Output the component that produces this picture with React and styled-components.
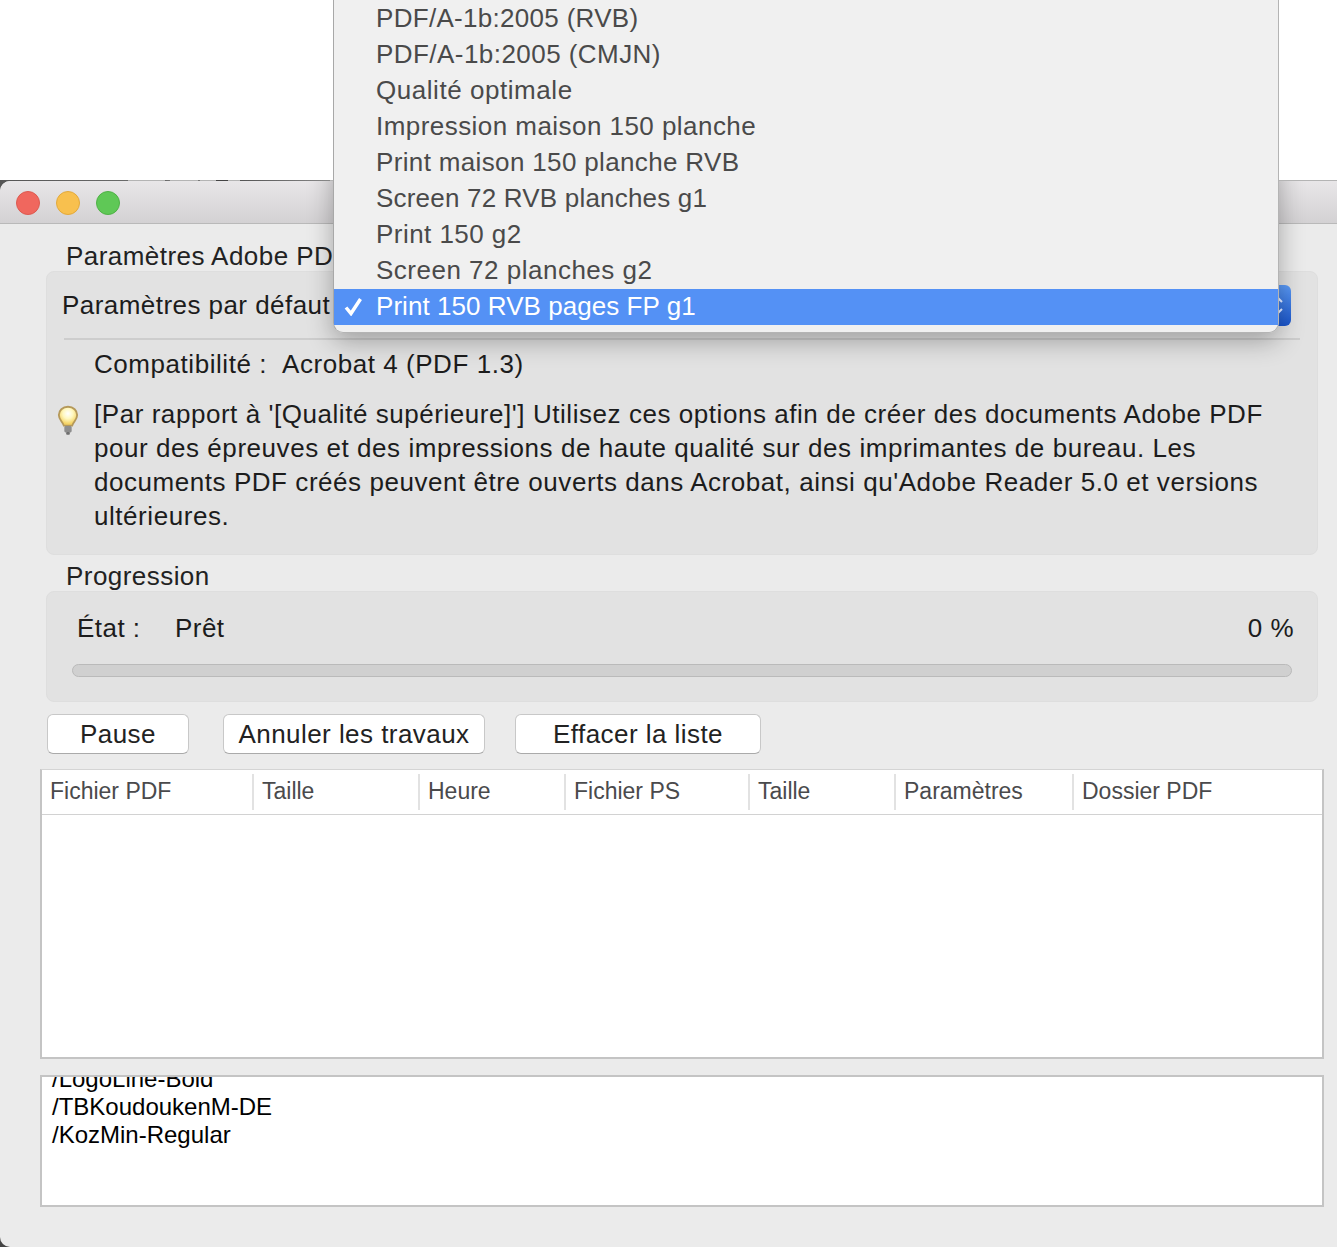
import * as React from 'react'
import styled, { createGlobalStyle } from 'styled-components'

const GlobalStyle = createGlobalStyle`
  html, body {
    margin: 0;
    padding: 0;
    background: #fff;
  }
  * {
    box-sizing: border-box;
  }
`

const Page = styled.div`
  position: relative;
  width: 1337px;
  height: 1247px;
  overflow: hidden;
  padding-top: 181px;
  background: #fff;
  font-family: "Liberation Sans", Arial, sans-serif;
  letter-spacing: 0.45px;
  color: #1c1c1c;
`

// the window behind, only its clipped edge shows above the title bar
const BehindEdge = styled.div`
  position: absolute;
  left: 0;
  top: 180px;
  width: 100%;
  height: 12px;
  background: linear-gradient(
    90deg,
    #555 0,
    #6a6a6a 128px,
    #b4b4b4 128px,
    #b4b4b4 165px,
    #666 165px,
    #777 170px,
    #b4b4b4 170px,
    #b4b4b4 198px,
    #777 198px,
    #777 200px,
    #b4b4b4 200px,
    #b4b4b4 216px,
    #444 216px,
    #444 228px,
    #b4b4b4 228px,
    #b4b4b4 240px,
    #555 240px,
    #888 330px,
    #b4b4b4 330px
  );
`

const BehindCorner = styled.div`
  position: absolute;
  left: 0;
  bottom: 0;
  width: 12px;
  height: 12px;
  background: #444;
`

const Window = styled.div`
  position: relative;
  height: 1066px;
  overflow: hidden;
  background: #ebebeb;
  border-radius: 10px 0 0 10px;
`

const TitleBar = styled.div`
  height: 43px;
  display: flex;
  align-items: center;
  gap: 16px;
  padding: 2px 16px 0;
  background: linear-gradient(#e8e6e8, #d3d1d3);
  border-bottom: 1px solid #b9b9b9;
`

const Light = styled.span`
  width: 24px;
  height: 24px;
  border-radius: 50%;
  background: ${(props) => props.color};
  border: 1px solid ${(props) => props.edge};
`

const Content = styled.div`
  padding: 17px 13px 0 40px;
`

const GroupLabel = styled.div`
  font-size: 26px;
  line-height: 30px;
  margin-left: 26px;
  color: #222;
`

const GroupBox = styled.div`
  margin: 0 6px 0 6px;
  background: #e2e2e2;
  border: 1px solid #dedede;
  border-radius: 8px;
`

const SettingsBox = styled(GroupBox)`
  height: 284px;
  padding: 13px 17px 0 15px;
`

const PresetRow = styled.div`
  display: flex;
  align-items: center;
  justify-content: space-between;
  height: 41px;
  font-size: 26px;
`

const SelectButton = styled.div`
  width: 958px;
  height: 41px;
  margin-right: 9px;
  border-radius: 6px;
  background: linear-gradient(#5b9bf8, #1a55cb);
`

const Divider = styled.div`
  height: 2px;
  margin: 12px 0 0 2px;
  background: #cdcdcd;
`

const CompatRow = styled.div`
  display: flex;
  gap: 15px;
  padding-left: 32px;
  margin-top: 7px;
  font-size: 26px;
  line-height: 34px;
  letter-spacing: 0.55px;
`

const Description = styled.div`
  display: flex;
  margin-top: 16px;
`

const BulbIcon = styled.svg`
  flex: none;
  width: 22px;
  height: 33px;
  margin: 7px 15px 0 -5px;
`

const DescriptionText = styled.p`
  margin: 0;
  font-size: 26px;
  line-height: 34px;
  letter-spacing: 0.55px;
  width: 1200px;
`

const ProgressLabel = styled(GroupLabel)`
  margin-top: 6px;
`

const ProgressBox = styled(GroupBox)`
  height: 111px;
  padding: 20px 25px 0 25px;
`

const StatusRow = styled.div`
  display: flex;
  align-items: center;
  font-size: 26px;
  line-height: 32px;
  padding-left: 5px;
`

const StatusLabel = styled.span`
  width: 98px;
`

const Percent = styled.span`
  margin-left: auto;
  margin-right: -2px;
`

const Track = styled.div`
  height: 13px;
  margin-top: 20px;
  border-radius: 7px;
  background: #d0d0d0;
  border: 1px solid #bababa;
`

const ButtonRow = styled.div`
  display: flex;
  margin: 12px 0 0 7px;
`

const Button = styled.button`
  width: ${(props) => props.w}px;
  height: 40px;
  margin-right: ${(props) => props.gap}px;
  padding: 0;
  background: #fff;
  border: 1px solid #c8c8c8;
  border-bottom-color: #aaa;
  border-radius: 6px;
  font-family: inherit;
  font-size: 26px;
  letter-spacing: inherit;
  color: #222;
`

const Table = styled.div`
  height: 290px;
  margin-top: 15px;
  background: #fff;
  border: 2px solid #c4c4c4;
  border-top-width: 1px;
  border-top-color: #d4d4d4;
`

const TableHead = styled.div`
  display: flex;
  height: 45px;
  align-items: center;
  border-bottom: 1px solid #d2d2d2;
`

const HeadCell = styled.div`
  width: ${(props) => props.w}px;
  height: 36px;
  padding-left: 8px;
  line-height: 35px;
  font-size: 23px;
  letter-spacing: 0;
  color: #4a4a4c;
  border-right: 2px solid #e2e2e2;
  &:last-child {
    border-right: none;
  }
`

const LogBox = styled.div`
  height: 132px;
  margin-top: 16px;
  padding: 0 10px;
  overflow: hidden;
  background: #fff;
  border: 2px solid #c4c4c4;
  font-size: 24px;
  letter-spacing: 0;
  line-height: 28px;
  color: #000;
`

const LogInner = styled.div`
  margin-top: -12px;
`

const MenuShadow = styled.div`
  position: absolute;
  left: 333px;
  top: -30px;
  width: 946px;
  height: 182px;
  border-radius: 0 0 10px 10px;
  box-shadow: 0 8px 26px rgba(0, 0, 0, 0.3);
`

const Menu = styled.div`
  position: absolute;
  left: 333px;
  top: 0;
  width: 946px;
  height: 333px;
  padding-top: 1px;
  background: #f0f0f0;
  border-radius: 0 0 10px 10px;
  border: 1px solid #b4b4b4;
  border-top: none;
  border-left-color: #a8a8a8;
`

const MenuItem = styled.div`
  position: relative;
  height: 36px;
  padding-left: 42px;
  font-size: 26px;
  line-height: 35px;
  letter-spacing: ${(props) => props.spacing}px;
  color: ${(props) => (props.selected ? '#fff' : '#4a4a4a')};
  background: ${(props) => (props.selected ? '#5491f5' : 'transparent')};
`

const Check = styled.svg`
  position: absolute;
  left: 10px;
  top: 8px;
  width: 19px;
  height: 19px;
`

const Chevrons = styled.svg`
  position: absolute;
  left: 1278px;
  top: 296px;
  width: 6px;
  height: 20px;
`

const presets = [
  ['PDF/A-1b:2005 (RVB)', 0.3],
  ['PDF/A-1b:2005 (CMJN)', 0.45],
  ['Qualité optimale', 0.55],
  ['Impression maison 150 planche', 0.45],
  ['Print maison 150 planche RVB', 0.35],
  ['Screen 72 RVB planches g1', 0.2],
  ['Print 150 g2', 0.45],
  ['Screen 72 planches g2', 0.5],
  ['Print 150 RVB pages FP g1', 0.05],
]

const columns = [
  ['Fichier PDF', 212],
  ['Taille', 166],
  ['Heure', 146],
  ['Fichier PS', 184],
  ['Taille', 146],
  ['Paramètres', 178],
  ['Dossier PDF', 248],
]

const Bulb = () => (
  <BulbIcon viewBox="0 0 24 33">
    <defs>
      <radialGradient id="glow" cx="50%" cy="36%" r="55%">
        <stop offset="0%" stopColor="#ffffff" />
        <stop offset="50%" stopColor="#fff8c0" />
        <stop offset="100%" stopColor="#f4d264" />
      </radialGradient>
    </defs>
    <path
      d="M12 1.5C6 1.5 2 5.8 2 10.6c0 5 3.8 6.8 5.4 11.4h9.2C18.2 17.4 22 15.6 22 10.6 22 5.8 18 1.5 12 1.5z"
      fill="url(#glow)"
      stroke="#b5995a"
      strokeWidth="2"
    />
    <rect x="8" y="22.5" width="8" height="7" rx="1.5" fill="#8d8d8d" />
    <rect x="10" y="29" width="4" height="3" rx="1" fill="#6f6f6f" />
  </BulbIcon>
)

export default function App() {
  return (
    <Page>
      <GlobalStyle />
      <BehindEdge />
      <BehindCorner />
      <Window>
        <TitleBar>
          <Light color="#f0675e" edge="#dc5a50" />
          <Light color="#f8c04e" edge="#e2a93c" />
          <Light color="#5fc856" edge="#4fb146" />
        </TitleBar>
        <Content>
          <GroupLabel>Paramètres Adobe PDF</GroupLabel>
          <SettingsBox>
            <PresetRow>
              <span>Paramètres par défaut</span>
              <SelectButton />
            </PresetRow>
            <Divider />
            <CompatRow>
              <span>Compatibilité :</span>
              <span>Acrobat 4 (PDF 1.3)</span>
            </CompatRow>
            <Description>
              <Bulb />
              <DescriptionText>
                [Par rapport à '[Qualité supérieure]'] Utilisez ces options afin de créer des documents Adobe PDF pour des épreuves et des impressions de haute qualité sur des imprimantes de bureau. Les documents PDF créés peuvent être ouverts dans Acrobat, ainsi qu'Adobe Reader 5.0 et versions ultérieures.
              </DescriptionText>
            </Description>
          </SettingsBox>
          <ProgressLabel>Progression</ProgressLabel>
          <ProgressBox>
            <StatusRow>
              <StatusLabel>État :</StatusLabel>
              <span>Prêt</span>
              <Percent>0 %</Percent>
            </StatusRow>
            <Track />
          </ProgressBox>
          <ButtonRow>
            <Button w={142} gap={34}>Pause</Button>
            <Button w={262} gap={30}>Annuler les travaux</Button>
            <Button w={246} gap={0}>Effacer la liste</Button>
          </ButtonRow>
          <Table>
            <TableHead>
              {columns.map(([name, w], i) => (
                <HeadCell key={i} w={w}>{name}</HeadCell>
              ))}
            </TableHead>
          </Table>
          <LogBox>
            <LogInner>
              <div>/LogoLine-Bold</div>
              <div>/TBKoudoukenM-DE</div>
              <div>/KozMin-Regular</div>
            </LogInner>
          </LogBox>
        </Content>
        <MenuShadow />
      </Window>
      <Chevrons viewBox="0 0 6 20">
        <path d="M0 2l4 4M4 13l-4 4" stroke="#c8d4ee" strokeWidth="2" fill="none" />
      </Chevrons>
      <Menu>
        {presets.map(([name, spacing], i) => (
          <MenuItem key={name} spacing={spacing} selected={i === presets.length - 1}>
            {i === presets.length - 1 && (
              <Check viewBox="0 0 19 19">
                <path d="M2 10.5l5 6L16.5 2" stroke="#fff" strokeWidth="3.5" fill="none" />
              </Check>
            )}
            {name}
          </MenuItem>
        ))}
      </Menu>
    </Page>
  )
}
